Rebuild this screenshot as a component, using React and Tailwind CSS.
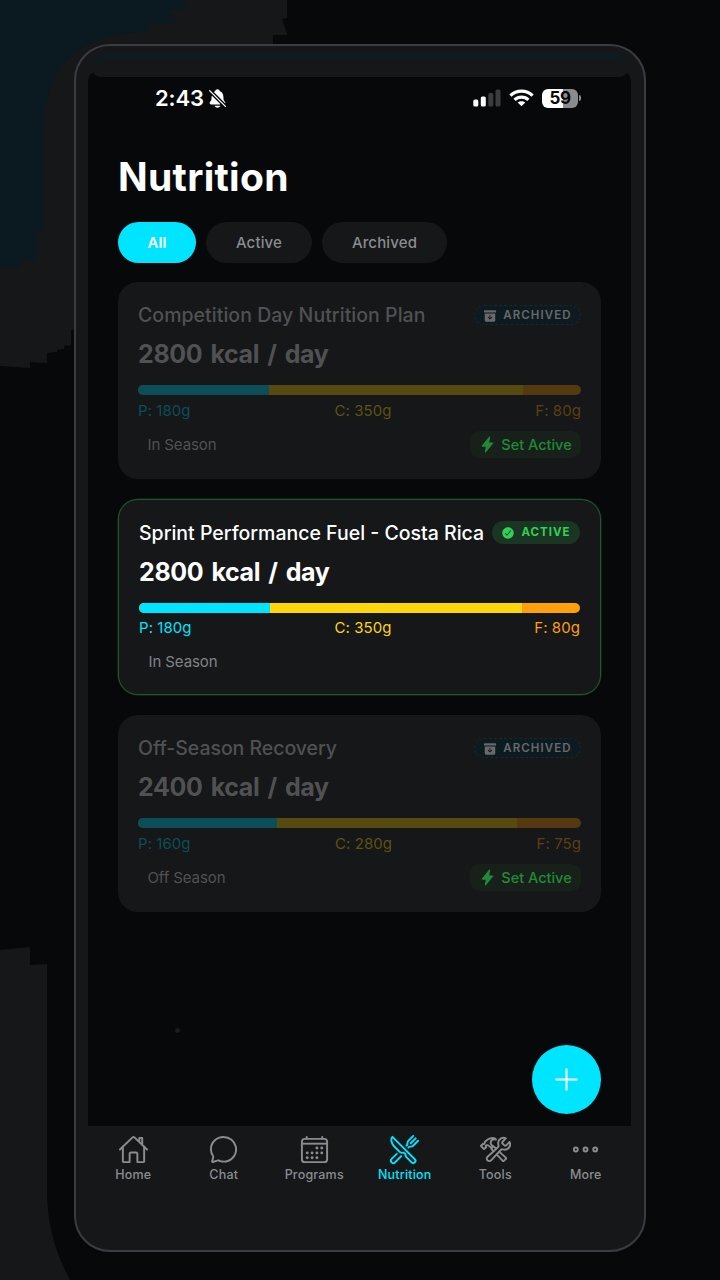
// src/screens/NutritionScreen.jsx
import {
  IoArchive,
  IoCalendarOutline,
  IoChatbubbleOutline,
  IoCheckmarkCircle,
  IoConstructOutline,
  IoEllipsisHorizontalOutline,
  IoFlash,
  IoHomeOutline,
  IoNotificationsOff,
  IoRestaurantOutline,
} from 'react-icons/io5'

const FILTERS = [
  { label: 'All', width: 'w-[78px]', active: true },
  { label: 'Active', width: 'w-[106px]' },
  { label: 'Archived', width: 'w-[125px]' },
]

const PLANS = [
  { name: 'Competition Day Nutrition Plan', kcal: 2800, p: 180, c: 350, f: 80, bar: [29.6, 57.4], season: 'In Season', nameSpacing: 'tracking-[0.04px]' },
  { name: 'Sprint Performance Fuel - Costa Rica', kcal: 2800, p: 180, c: 350, f: 80, bar: [29.6, 57.2], season: 'In Season', active: true, nameSpacing: 'tracking-[0px]' },
  { name: 'Off-Season Recovery', kcal: 2400, p: 160, c: 280, f: 75, bar: [31.3, 54.3], season: 'Off Season', nameSpacing: 'tracking-[-0.05px]' },
]

const TABS = [
  { label: 'Home', Icon: IoHomeOutline },
  { label: 'Chat', Icon: IoChatbubbleOutline },
  { label: 'Programs', Icon: IoCalendarOutline },
  { label: 'Nutrition', Icon: IoRestaurantOutline, active: true },
  { label: 'Tools', Icon: IoConstructOutline },
  { label: 'More', Icon: IoEllipsisHorizontalOutline },
]

function Backdrop() {
  return (
    <svg className="absolute inset-0" width="720" height="1280" viewBox="0 0 720 1280">
      <path fill="#151719" d="M0 0H287V18L282 19L287 33V35H273V60H90V330H71V345L64 346V349L57 350V352L47 353V363L30 362V368L0 366Z" />
      <path fill="#0a1a20" d="M0 0H185V9L170 10L177 23L145 24L150 31C85 35 44 55 44 135V230H36V261H21V268H0Z" />
      <path fill="#151719" d="M0 950L30 947V965L47 964V1195C48 1235 60 1260 70 1280H0Z" />
    </svg>
  )
}

function StatusBar() {
  return (
    <div className="flex h-[42px] items-center justify-between pl-[67px] pr-[50px] text-white">
      <div className="flex items-center gap-[3px]">
        <span className="text-[22px] font-semibold leading-none tracking-[-0.1px]">2:43</span>
        <IoNotificationsOff size={21} />
      </div>
      <div className="flex items-center">
        <svg width="28" height="18" viewBox="0 0 28 18">
          <rect x="0.3" y="10.5" width="5" height="7" rx="1.5" fill="#fff" />
          <rect x="7.8" y="7.5" width="5" height="10" rx="1.5" fill="#fff" />
          <rect x="15.3" y="4" width="5" height="13.5" rx="1.5" fill="#3c3c3e" />
          <rect x="22.5" y="0.5" width="5" height="17" rx="1.5" fill="#3c3c3e" />
        </svg>
        <svg className="ml-2" width="25" height="18" viewBox="0 0 25 18" fill="none" stroke="#fff" strokeWidth="3.2">
          <path d="M1.4 6.6C7.5 0.6 17.5 0.6 23.6 6.6" />
          <path d="M5.6 10.8C9.4 7.1 15.6 7.1 19.4 10.8" />
          <path d="M12.5 17.3L8.7 13.6C10.8 11.7 14.2 11.7 16.3 13.6Z" fill="#fff" stroke="none" />
        </svg>
        <div className="ml-2 flex h-[19px] w-9 items-center justify-center rounded-[6px] bg-[linear-gradient(90deg,#fff_59%,#8b8b8c_59%)] text-[17px] font-bold leading-none tracking-[-0.5px] text-[#070809]">
          59
        </div>
        <div className="ml-[1px] h-1.5 w-0.5 rounded-r bg-[#8b8b8c]" />
      </div>
    </div>
  )
}

function PlanCard({ plan }) {
  const { active } = plan
  return (
    <div className={active
      ? 'flex h-[196.5px] flex-col rounded-[20px] border border-[#21562d] bg-[#151719] px-5 pt-5 ring-[0.5px] ring-[#21562d]/60'
      : 'flex h-[196.5px] flex-col rounded-[20px] bg-[#151719] px-5 pt-5'}>
      <div className="flex h-[26px] items-center justify-between whitespace-nowrap">
        <h2 className={`${plan.nameSpacing} pt-[2px] text-[19.5px] font-medium leading-none ${active ? 'text-white' : 'text-[#505153]'}`}>
          {plan.name}
        </h2>
        {active ? (
          <span className="flex h-[23px] w-[88px] shrink-0 items-center justify-center gap-1.5 rounded-full bg-[#1b3523] text-[11.5px] font-bold tracking-[1px] text-[#30d158]">
            <IoCheckmarkCircle size={14} />ACTIVE
          </span>
        ) : (
          <span className="flex h-5 w-[107px] shrink-0 items-center justify-center gap-[6px] rounded-full border border-dashed border-[#1a272d] bg-[#0d1b21] pt-px text-[11.5px] font-semibold tracking-[1.1px] text-[#68696b]">
            <IoArchive size={14} />ARCHIVED
          </span>
        )}
      </div>

      <p className={`mt-3 h-7 whitespace-nowrap text-[25px] font-bold leading-7 tracking-[-0.35px] [word-spacing:2.5px] ${active ? 'text-white' : 'text-[#505153]'}`}>
        {plan.kcal} kcal / day
      </p>

      {/* Macro split */}
      <div className={`mt-[17px] flex h-2.5 shrink-0 overflow-hidden rounded-full ${active ? 'bg-[#ff9f0a]' : 'bg-[#553a10]'}`}>
        <div className={active ? 'bg-[#00e5ff]' : 'bg-[#0c4e57]'} style={{ width: `${plan.bar[0]}%` }} />
        <div className={active ? 'bg-[#ffd60a]' : 'bg-[#574a10]'} style={{ width: `${plan.bar[1]}%` }} />
      </div>
      <div className="mt-[7px] flex h-[18px] items-center justify-between text-[15px] tracking-[0.06px]">
        <span className={active ? 'text-[#00e5ff]' : 'text-[#0c4e57]'}>P: {plan.p}g</span>
        <span className={active ? 'text-[#ffd60a]' : 'text-[#5f5110]'}>C: {plan.c}g</span>
        <span className={active ? 'text-[#ff9f0a]' : 'text-[#5d3f11]'}>F: {plan.f}g</span>
      </div>

      <div className="mt-[11px] flex h-[27px] items-center justify-between pl-[9.5px]">
        <span className={`pt-px text-[15px] tracking-[-0.1px] ${active ? 'text-[#828386]' : 'text-[#505153]'}`}>{plan.season}</span>
        {!active && (
          <button className="flex h-[27px] w-[111px] items-center justify-center gap-[5px] rounded-[9px] bg-[#172019] text-[14.5px] font-medium text-[#22893a]">
            <IoFlash size={17} />Set Active
          </button>
        )}
      </div>
    </div>
  )
}

export default function App() {
  return (
    <div className="relative h-[1280px] w-[720px] overflow-hidden bg-[#070809] pl-[74px] pt-[44px] font-['Inter',sans-serif]">
      <Backdrop />
      <div className="relative flex h-[1208px] w-[572px] flex-col rounded-[36px] border-2 border-[#3b3c42] bg-[#151719]">
        {/* Earpiece strip, laps over the top edge of the screen */}
        <div className="z-10 ml-4 mt-2 h-[23px] w-[536px] shrink-0 rounded-t-[16px] rounded-b-[10px] border-t-4 border-[#0a1d24] bg-[#151719]" />

        <main className="relative -mt-[7px] ml-3 flex h-[1056px] w-[543px] shrink-0 flex-col rounded-t-[12px] bg-[#070809] pt-[7px]">
          <StatusBar />

          <div className="px-[30px]">
            <h1 className="mt-[34px] h-12 text-[39px] font-bold leading-[48px] tracking-[0.3px] text-white">Nutrition</h1>

            <div className="mt-[20.5px] flex gap-2.5">
              {FILTERS.map((f) => (
                <button
                  key={f.label}
                  className={`${f.width} h-[41px] rounded-full pt-0.5 text-[15px] ${f.active ? 'bg-[#00e5ff] font-semibold text-white' : 'bg-[#151719] font-medium tracking-[0.15px] text-[#8b8c8f]'}`}>
                  {f.label}
                </button>
              ))}
            </div>

            <div className="mt-[19.5px] flex flex-col gap-5">
              {PLANS.map((plan) => <PlanCard key={plan.name} plan={plan} />)}
            </div>
          </div>

          <span className="absolute left-[87px] top-[958px] h-[5px] w-[5px] rounded-full bg-[#1a1c1e]" />
          <button className="absolute right-[30px] bottom-3 flex h-[69px] w-[69px] items-center justify-center rounded-full bg-[#00e5ff] text-white">
            <svg width="23" height="23" viewBox="0 0 23 23" fill="none" stroke="currentColor" strokeWidth="2" strokeLinecap="round">
              <path d="M11.5 1.2v20.6M1.2 11.5h20.6" />
            </svg>
          </button>
        </main>

        {/* Tab bar */}
        <nav className="ml-3 grid w-[543px] grid-cols-6 pt-2">
          {TABS.map(({ label, Icon, active }) => (
            <div key={label} className={`flex flex-col items-center ${active ? 'text-[#00e5ff]' : 'text-[#8b8c8f]'}`}>
              <Icon size={31} />
              <span className="mt-[2px] text-[12.5px] font-medium leading-4 tracking-[0.2px]">{label}</span>
            </div>
          ))}
        </nav>
      </div>
    </div>
  )
}
